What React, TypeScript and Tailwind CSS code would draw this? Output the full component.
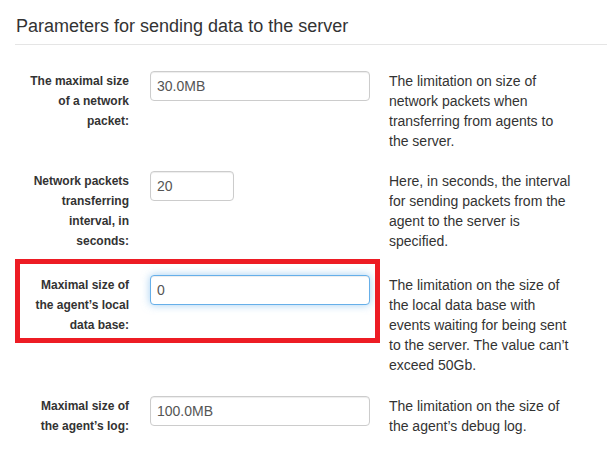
import React from "react";

type Row = {
  label: string;
  value: string;
  inputW: string;
  desc: string;
  mt: string;
  focused?: boolean;
};

const rows: Row[] = [
  {
    label: "The maximal size of a network packet:",
    value: "30.0MB",
    inputW: "w-[220px]",
    desc: "The limitation on size of network packets when transferring from agents to the server.",
    mt: "mt-[26px]",
  },
  {
    label: "Network packets transferring interval, in seconds:",
    value: "20",
    inputW: "w-[84px]",
    desc: "Here, in seconds, the interval for sending packets from the agent to the server is specified.",
    mt: "mt-[20px]",
  },
  {
    label: "Maximal size of the agent\u2019s local data base:",
    value: "0",
    inputW: "w-[220px]",
    desc: "The limitation on the size of the local data base with events waiting for being sent to the server. The value can\u2019t exceed 50Gb.",
    mt: "mt-[24px]",
    focused: true,
  },
  {
    label: "Maximal size of the agent\u2019s log:",
    value: "100.0MB",
    inputW: "w-[220px]",
    desc: "The limitation on the size of the agent\u2019s debug log.",
    mt: "mt-[21px]",
  },
];

export default function App() {
  return (
    <div className="relative w-[607px] h-[468px] overflow-hidden bg-white text-[#333] font-['Liberation_Sans',Arial,sans-serif]">
      <div className="pl-[15px] pt-[16px]">
        <h4 className="text-[18px] leading-[20px] font-normal pb-[8px] pl-[1px] border-b border-[#e5e5e5]">
          Parameters for sending data to the server
        </h4>
      </div>

      {rows.map((r, i) => (
        <div key={i} className={`flex items-start pl-[25px] ${r.mt}`}>
          <div className="w-[104px] text-right text-[12px] leading-[20px] font-bold text-[#333]">
            {r.label}
          </div>
          <div className="ml-[21px] w-[219px] shrink-0">
            <input
              readOnly
              value={r.value}
              className={`${r.inputW} h-[30px] block rounded-[4px] border bg-white px-[6px] text-[14px] text-[#555] outline-none font-['Liberation_Sans',Arial,sans-serif] ${
                r.focused
                  ? "border-[#66afe9] shadow-[inset_0_1px_1px_rgba(0,0,0,0.075),0_0_8px_rgba(102,175,233,0.6)]"
                  : "border-[#ccc] shadow-[inset_0_1px_1px_rgba(0,0,0,0.075)]"
              }`}
            />
          </div>
          <div className="ml-[20px] w-[185px] text-[14px] leading-[20px] text-[#333]">
            {r.desc}
          </div>
        </div>
      ))}

      <div className="absolute left-[15px] top-[259px] w-[365px] h-[84px] border-[5px] border-[#ed1c24] pointer-events-none" />
    </div>
  );
}
